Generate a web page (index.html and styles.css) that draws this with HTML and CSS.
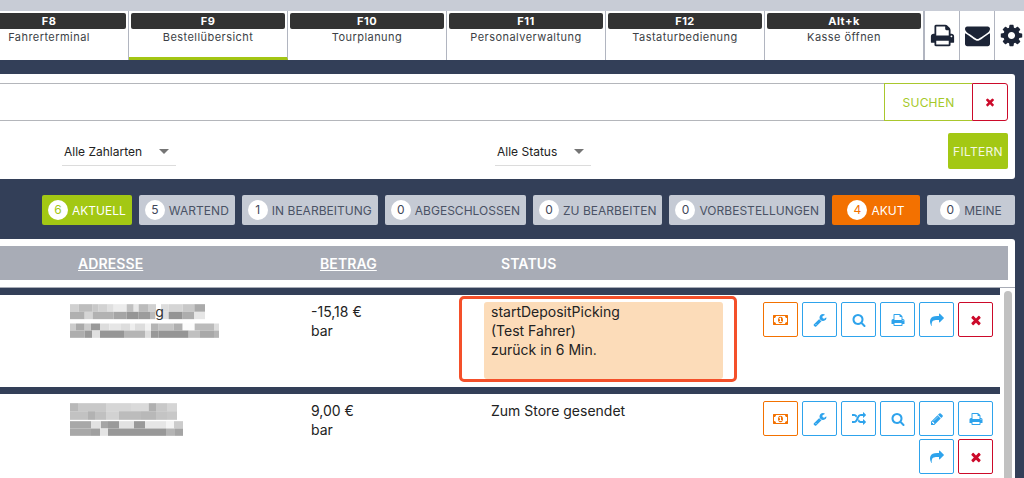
FILE: index.html
```html
<!DOCTYPE html>
<html lang="de">
<head>
<meta charset="utf-8">
<title>Bestellübersicht</title>
<link rel="stylesheet" href="styles.css">
</head>
<body>
<svg class="defs" xmlns="http://www.w3.org/2000/svg">
<symbol id="i-times" viewBox="0 0 1792 1792"><path d="M1490 1322q0 40-28 68l-136 136q-28 28-68 28t-68-28l-294-294-294 294q-28 28-68 28t-68-28l-136-136q-28-28-28-68t28-68l294-294-294-294q-28-28-28-68t28-68l136-136q28-28 68-28t68 28l294 294 294-294q28-28 68-28t68 28l136 136q28 28 28 68t-28 68l-294 294 294 294q28 28 28 68z"/></symbol>
<symbol id="i-search" viewBox="0 0 1792 1792"><path d="M1216 832q0-185-131.500-316.500t-316.500-131.500-316.500 131.500-131.500 316.500 131.500 316.500 316.500 131.500 316.500-131.500 131.500-316.500zm512 832q0 52-38 90t-90 38q-54 0-90-38l-343-342q-179 124-399 124-143 0-273.500-55.500t-225-150-150-225-55.500-273.500 55.500-273.500 150-225 225-150 273.500-55.500 273.500 55.500 225 150 150 225 55.500 273.500q0 220-124 399l343 343q37 37 37 90z"/></symbol>
<symbol id="i-print" viewBox="0 0 1792 1792"><path d="M448 1536h896v-256h-896v256zm0-640h896v-384h-160q-40 0-68-28t-28-68v-160h-640v640zm1152 64q0-26-19-45t-45-19-45 19-19 45 19 45 45 19 45-19 19-45zm128 0v416q0 13-9.500 22.500t-22.500 9.500h-224v160q0 40-28 68t-68 28h-960q-40 0-68-28t-28-68v-160h-224q-13 0-22.500-9.500t-9.500-22.500v-416q0-79 56.500-135.500t135.500-56.500h64v-544q0-40 28-68t68-28h672q40 0 88 20t76 48l152 152q28 28 48 76t20 88v256h64q79 0 135.500 56.500t56.500 135.500z"/></symbol>
<symbol id="i-envelope" viewBox="0 0 1792 1792"><path d="M1792 710v794q0 66-47 113t-113 47h-1472q-66 0-113-47t-47-113v-794q44 49 101 87 362 246 497 345 57 42 92.500 65.500t94.500 48 110 24.500h2q51 0 110-24.500t94.500-48 92.500-65.500q170-123 498-345 57-39 100-87zm0-294q0 79-49 151t-122 123q-376 261-468 325-10 7-42.500 30.500t-54 38-52 32.500-57.500 27-50 9h-2q-23 0-50-9t-57.500-27-52-32.500-54-38-42.500-30.500q-91-64-262-182.500t-205-142.500q-62-42-117-115.500t-55-136.500q0-78 41.500-130t118.500-52h1472q65 0 112.500 47t47.500 113z"/></symbol>
<symbol id="i-cog" viewBox="0 0 1792 1792"><path d="M1152 896q0-106-75-181t-181-75-181 75-75 181 75 181 181 75 181-75 75-181zm512-109v222q0 12-8 23t-20 13l-185 28q-19 54-39 91 35 50 107 138 10 12 10 25t-9 23q-27 37-99 108t-94 71q-12 0-26-9l-138-108q-44 23-91 38-16 136-29 186-7 28-36 28h-222q-14 0-24.500-8.500t-11.500-21.500l-28-184q-49-16-90-37l-141 107q-10 9-25 9-14 0-25-11-126-114-165-168-7-10-7-23 0-12 8-23 15-21 51-66.500t54-70.500q-27-50-41-99l-183-27q-13-2-21-12.500t-8-23.500v-222q0-12 8-23t19-13l186-28q14-46 39-92-40-57-107-138-10-12-10-24 0-10 9-23 26-36 98.500-107.500t94.500-71.500q13 0 26 10l138 107q44-23 91-38 16-136 29-186 7-28 36-28h222q14 0 24.500 8.500t11.500 21.500l28 184q49 16 90 37l142-107q9-9 24-9 13 0 25 10 129 119 165 170 7 8 7 22 0 12-8 23-15 21-51 66.500t-54 70.500q26 50 41 98l183 28q13 2 21 12.500t8 23.500z"/></symbol>
<symbol id="i-wrench" viewBox="0 0 1792 1792"><path d="M448 1472q0-26-19-45t-45-19-45 19-19 45 19 45 45 19 45-19 19-45zm644-420l-682 682q-37 37-90 37-52 0-91-37l-106-108q-38-36-38-90 0-53 38-91l681-681q39 98 114.500 173.500t173.500 114.500zm634-435q0 39-23 106-47 134-164.500 217.500t-258.500 83.500q-185 0-316.500-131.500t-131.500-316.500 131.500-316.500 316.500-131.500q58 0 121.500 16.500t107.500 46.500q16 11 16 28t-16 28l-293 169v224l193 107q5-3 79-48.500t135.500-81 70.500-35.500q15 0 23.500 10t8.500 25z"/></symbol>
<symbol id="i-share" viewBox="0 0 1792 1792"><path d="M1792 640q0 26-19 45l-512 512q-19 19-45 19t-45-19-19-45v-256h-224q-98 0-175.500 6t-154 21.500-133 42.500-105.500 69.500-80 101-48.500 138.500-17.500 181q0 55 5 123 0 6 2.500 23.500t2.500 26.500q0 15-8.500 25t-23.500 10q-16 0-28-17-7-9-13-22t-13.500-30-10.500-24q-127-285-127-451 0-199 53-333 162-403 875-403h224v-256q0-26 19-45t45-19 45 19l512 512q19 19 19 45z"/></symbol>
<symbol id="i-random" viewBox="0 0 1792 1792"><path d="M666 481q-60 92-137 273-22-45-37-72.500t-40.500-63.500-51-56.500-63-35-81.500-14.500h-224q-14 0-23-9t-9-23v-192q0-14 9-23t23-9h224q250 0 410 225zm1126 799q0 14-9 23l-320 320q-9 9-23 9-13 0-22.500-9.500t-9.500-22.500v-192q-32 0-85 .5t-81 1-73-1-71-5-64-10.500-63-18.500-58-28.500-59-40-55-53.500-56-69.500q59-93 136-273 22 45 37 72.500t40.500 63.500 51 56.500 63 35 81.500 14.500h256v-192q0-14 9-23t23-9q12 0 24 10l319 319q9 9 9 23zm0-896q0 14-9 23l-320 320q-9 9-23 9-13 0-22.500-9.500t-9.500-22.500v-192h-256q-48 0-87 15t-69 45-51 61.500-45 77.500q-32 62-78 171-29 66-49.500 111t-54 105-64 100-74 83-90 68.500-106.500 42-128 16.500h-224q-14 0-23-9t-9-23v-192q0-14 9-23t23-9h224q48 0 87-15t69-45 51-61.500 45-77.500q32-62 78-171 29-66 49.500-111t54-105 64-100 74-83 90-68.500 106.500-42 128-16.500h256v-192q0-14 9-23t23-9q12 0 24 10l319 319q9 9 9 23z"/></symbol>
<symbol id="i-pencil" viewBox="0 0 1792 1792"><path d="M491 1536l91-91-235-235-91 91v107h128v128h107zm523-928q0-22-22-22-10 0-17 7l-542 542q-7 7-7 17 0 22 22 22 10 0 17-7l542-542q7-7 7-17zm-54-192l416 416-832 832h-416v-416zm683 96q0 53-37 90l-166 166-416-416 166-165q36-38 90-38 53 0 91 38l235 234q37 39 37 91z"/></symbol>
<symbol id="i-money" viewBox="0 0 2048 1792"><path d="M768 1152h384v-96h-128v-448h-114l-148 137 77 80q42-37 55-57h2v288h-128v96zm512-256q0 70-21 142t-59.500 134-101.500 101-138 39-138-39-101.500-101-59.500-134-21-142 21-142 59.500-134 101.500-101 138-39 138 39 101.500 101 59.500 134 21 142zm512 256v-512q-106 0-181-75t-75-181h-1152q0 106-75 181t-181 75v512q106 0 181 75t75 181h1152q0-106 75-181t181-75zm128-832v1152q0 26-19 45t-45 19h-1792q-26 0-45-19t-19-45v-1152q0-26 19-45t45-19h1792q26 0 45 19t19 45z"/></symbol>
</svg>

<div class="strip"></div>
<nav class="nav">
  <a class="tab"><span class="key">F8</span><span class="label">Fahrerterminal</span></a>
  <a class="tab active"><span class="key">F9</span><span class="label">Bestellübersicht</span></a>
  <a class="tab"><span class="key">F10</span><span class="label">Tourplanung</span></a>
  <a class="tab"><span class="key">F11</span><span class="label">Personalverwaltung</span></a>
  <a class="tab"><span class="key">F12</span><span class="label">Tastaturbedienung</span></a>
  <a class="tab tab-last"><span class="key">Alt+k</span><span class="label">Kasse öffnen</span></a>
  <a class="tool"><svg class="tool-icon"><use href="#i-print"/></svg></a>
  <a class="tool"><svg class="tool-icon"><use href="#i-envelope"/></svg></a>
  <a class="tool tool-end"><svg class="tool-icon"><use href="#i-cog"/></svg></a>
</nav>

<section class="search-card">
  <div class="search-row">
    <div class="search-input"></div>
    <button class="btn-search">SUCHEN</button>
    <button class="btn-clear"><svg class="icon-sm"><use href="#i-times"/></svg></button>
  </div>
  <div class="filter-row">
    <div class="select select-pay"><span>Alle Zahlarten</span><i class="caret"></i></div>
    <div class="select select-status"><span>Alle Status</span><i class="caret"></i></div>
    <button class="btn-filter">FILTERN</button>
  </div>
</section>

<div class="status-tabs">
  <a class="stab stab-green"><b class="count">6</b>AKTUELL</a>
  <a class="stab"><b class="count">5</b>WARTEND</a>
  <a class="stab"><b class="count">1</b>IN BEARBEITUNG</a>
  <a class="stab"><b class="count">0</b>ABGESCHLOSSEN</a>
  <a class="stab"><b class="count">0</b>ZU BEARBEITEN</a>
  <a class="stab"><b class="count">0</b>VORBESTELLUNGEN</a>
  <a class="stab stab-orange stab-wide"><b class="count">4</b>AKUT</a>
  <a class="stab stab-wide"><b class="count">0</b>MEINE</a>
</div>

<section class="table-card">
  <div class="thead">
    <span></span>
    <a class="th th-addr">ADRESSE</a>
    <a class="th th-amount">BETRAG</a>
    <span class="th th-status">STATUS</span>
  </div>
  <div class="scroll">
    <div class="rows">
      <article class="row">
        <span></span>
        <svg class="mosaic" viewBox="12 14 447 101" width="149" height="34">
          <rect x="12" y="14" width="26" height="23" fill="#d0d0d0"/><rect x="38" y="14" width="42" height="23" fill="#bdbdbd"/><rect x="80" y="14" width="18" height="23" fill="#c8c8c8"/><rect x="98" y="14" width="27" height="23" fill="#d2d2d2"/><rect x="125" y="14" width="18" height="23" fill="#dfdfdf"/><rect x="143" y="14" width="39" height="23" fill="#ececec"/><rect x="182" y="14" width="21" height="23" fill="#c0c0c0"/><rect x="203" y="14" width="15" height="23" fill="#e8e8e8"/><rect x="218" y="14" width="30" height="23" fill="#bbb"/><rect x="248" y="14" width="22" height="23" fill="#d0d0d0"/><rect x="285" y="14" width="23" height="23" fill="#ddd"/><rect x="308" y="14" width="42" height="23" fill="#d5d5d5"/><rect x="350" y="14" width="35" height="23" fill="#c8c8c8"/><rect x="385" y="14" width="32" height="23" fill="#aaa"/>
          <rect x="12" y="37" width="44" height="22" fill="#b0b0b0"/><rect x="56" y="37" width="24" height="22" fill="#d5d5d5"/><rect x="80" y="37" width="63" height="22" fill="#b2b2b2"/><rect x="143" y="37" width="39" height="22" fill="#a5a5a5"/><rect x="182" y="37" width="36" height="22" fill="#969696"/><rect x="218" y="37" width="34" height="22" fill="#9c9c9c"/><rect x="252" y="37" width="16" height="22" fill="#bbb"/><rect x="285" y="37" width="23" height="22" fill="#e0e0e0"/><rect x="308" y="37" width="42" height="22" fill="#949494"/><rect x="350" y="37" width="35" height="22" fill="#adadad"/><rect x="385" y="37" width="32" height="22" fill="#e6e6e6"/>
          <text x="268" y="51" class="mosaic-g">g</text>
          <rect x="12" y="72" width="18" height="21" fill="#ccc"/><rect x="30" y="72" width="26" height="21" fill="#aaa"/><rect x="56" y="72" width="19" height="21" fill="#ccc"/><rect x="75" y="72" width="27" height="21" fill="#999"/><rect x="102" y="72" width="28" height="21" fill="#ddd"/><rect x="130" y="72" width="35" height="21" fill="#e6e6e6"/><rect x="165" y="72" width="27" height="21" fill="#ddd"/><rect x="192" y="72" width="15" height="21" fill="#eee"/><rect x="207" y="72" width="30" height="21" fill="#ddd"/><rect x="237" y="72" width="18" height="21" fill="#f2f2f2"/><rect x="255" y="72" width="23" height="21" fill="#b5b5b5"/><rect x="278" y="72" width="45" height="21" fill="#c5c5c5"/><rect x="323" y="72" width="27" height="21" fill="#b0b0b0"/><rect x="350" y="72" width="36" height="21" fill="#fcfcfc"/><rect x="386" y="72" width="58" height="21" fill="#bbb"/><rect x="444" y="72" width="15" height="21" fill="#ddd"/>
          <rect x="12" y="93" width="44" height="22" fill="#aeaeae"/><rect x="56" y="93" width="22" height="22" fill="#999"/><rect x="78" y="93" width="24" height="22" fill="#e0e0e0"/><rect x="102" y="93" width="72" height="22" fill="#969696"/><rect x="174" y="93" width="63" height="22" fill="#b5b5b5"/><rect x="237" y="93" width="18" height="22" fill="#ddd"/><rect x="255" y="93" width="23" height="22" fill="#999"/><rect x="278" y="93" width="90" height="22" fill="#959595"/><rect x="368" y="93" width="34" height="22" fill="#c0c0c0"/><rect x="402" y="93" width="42" height="22" fill="#a8a8a8"/><rect x="444" y="93" width="15" height="22" fill="#b5b5b5"/>
        </svg>
        <div class="cell">-15,18 €<br>bar</div>
        <div class="status status-hot">startDepositPicking<br>(Test Fahrer)<br>zurück in 6 Min.</div>
        <div class="actions">
          <a class="act act-orange"><svg class="icon-sm"><use href="#i-money"/></svg></a>
          <a class="act"><svg class="icon-sm"><use href="#i-wrench"/></svg></a>
          <a class="act"><svg class="icon-sm"><use href="#i-search"/></svg></a>
          <a class="act"><svg class="icon-sm"><use href="#i-print"/></svg></a>
          <a class="act"><svg class="icon-sm"><use href="#i-share"/></svg></a>
          <a class="act act-red"><svg class="icon-sm"><use href="#i-times"/></svg></a>
        </div>
        <div class="highlight"></div>
      </article>
      <article class="row">
        <span></span>
        <svg class="mosaic" viewBox="12 12 339 98" width="113" height="33">
          <rect x="12" y="12" width="24" height="24" fill="#b8b8b8"/><rect x="36" y="12" width="84" height="24" fill="#c8c8c8"/><rect x="120" y="12" width="75" height="24" fill="#d6d6d6"/><rect x="195" y="12" width="53" height="24" fill="#dadada"/><rect x="248" y="12" width="22" height="24" fill="#b0b0b0"/><rect x="270" y="12" width="33" height="24" fill="#c8c8c8"/><rect x="303" y="12" width="30" height="24" fill="#d5d5d5"/>
          <rect x="12" y="36" width="54" height="26" fill="#c2c2c2"/><rect x="66" y="36" width="21" height="26" fill="#b2b2b2"/><rect x="87" y="36" width="33" height="26" fill="#c0c0c0"/><rect x="120" y="36" width="39" height="26" fill="#d2d2d2"/><rect x="159" y="36" width="66" height="26" fill="#bcbcbc"/><rect x="225" y="36" width="45" height="26" fill="#b8b8b8"/><rect x="270" y="36" width="33" height="26" fill="#c4c4c4"/><rect x="303" y="36" width="30" height="26" fill="#c8c8c8"/>
          <rect x="12" y="66" width="63" height="22" fill="#a8a8a8"/><rect x="75" y="66" width="30" height="22" fill="#e2e2e2"/><rect x="105" y="66" width="21" height="22" fill="#a5a5a5"/><rect x="126" y="66" width="33" height="22" fill="#9a9a9a"/><rect x="159" y="66" width="45" height="22" fill="#e2e2e2"/><rect x="204" y="66" width="33" height="22" fill="#999"/><rect x="237" y="66" width="63" height="22" fill="#e6e6e6"/><rect x="300" y="66" width="24" height="22" fill="#f4f4f4"/><rect x="324" y="66" width="27" height="22" fill="#ccc"/>
          <rect x="12" y="88" width="63" height="22" fill="#a8a8a8"/><rect x="75" y="88" width="27" height="22" fill="#a0a0a0"/><rect x="102" y="88" width="24" height="22" fill="#e4e4e4"/><rect x="126" y="88" width="174" height="22" fill="#989898"/><rect x="300" y="88" width="27" height="22" fill="#b4b4b4"/><rect x="327" y="88" width="24" height="22" fill="#a4a4a4"/>
        </svg>
        <div class="cell">9,00 €<br>bar</div>
        <div class="status">Zum Store gesendet</div>
        <div class="actions">
          <a class="act act-orange"><svg class="icon-sm"><use href="#i-money"/></svg></a>
          <a class="act"><svg class="icon-sm"><use href="#i-wrench"/></svg></a>
          <a class="act"><svg class="icon-sm"><use href="#i-random"/></svg></a>
          <a class="act"><svg class="icon-sm"><use href="#i-search"/></svg></a>
          <a class="act"><svg class="icon-sm"><use href="#i-pencil"/></svg></a>
          <a class="act"><svg class="icon-sm"><use href="#i-print"/></svg></a>
          <a class="act"><svg class="icon-sm"><use href="#i-share"/></svg></a>
          <a class="act act-red"><svg class="icon-sm"><use href="#i-times"/></svg></a>
        </div>
      </article>
    </div>
    <div class="track"><div class="thumb"></div></div>
  </div>
</section>
</body>
</html>
```
FILE: styles.css
```css
* { box-sizing: border-box; }
html, body { height: 100%; }
body {
  margin: 0;
  height: 478px;
  overflow: hidden;
  display: flex;
  flex-direction: column;
  background: #333f58;
  font-family: Inter, "Noto Sans", "Liberation Sans", sans-serif;
  font-size: 14px;
  color: #222;
}
.defs { position: absolute; width: 0; height: 0; }
button { font-family: inherit; cursor: pointer; padding: 0; background: #fff; }

.strip { height: 11px; background: #c8ccd6; flex: none; }

.nav {
  flex: none;
  display: flex;
  height: 49px;
  margin-left: -30px;
  width: 1054px;
  background: #fff;
}
.tab {
  width: 159px;
  flex: none;
  border-right: 1px solid #b1b5c0;
  padding: 2px 2px 0;
  text-align: center;
  display: block;
}
.tab-last { width: 160px; border-right-width: 2px; }
.tab.active { border-bottom: 3px solid #a3c514; }
.key {
  display: block;
  height: 16px;
  line-height: 16px;
  background: #333;
  color: #fff;
  border-radius: 2px;
  font-size: 11px;
  font-weight: 700;
  letter-spacing: 0.5px;
}
.label {
  display: block;
  margin-top: 1px;
  line-height: 15px;
  font-size: 11px;
  letter-spacing: 0.45px;
  color: #3c3f46;
}
.tool {
  width: 35px;
  flex: none;
  border-right: 1px solid #b1b5c0;
  display: flex;
  align-items: center;
  justify-content: center;
  padding-bottom: 1px;
}
.tool-end { border-right: 0; width: 29px; justify-content: flex-start; padding-left: 4px; }
.tool-icon { width: 25px; height: 25px; fill: #1c2436; }

.search-card {
  flex: none;
  margin: 14px 9px 0 0;
  height: 105px;
  background: #fff;
  border-radius: 0 3px 3px 0;
  padding: 9px 7px 0 0;
}
.search-row { display: flex; height: 38px; }
.search-input { flex: 1; border: 1px solid #b4b6bb; border-width: 1px 0; }
.btn-search {
  width: 88px;
  border: 1px solid #a9c72d;
  border-right: 0;
  color: #a5c92a;
  font-size: 12px;
  letter-spacing: 0.2px;
}
.btn-clear {
  width: 36px;
  border: 1px solid #cc0a2a;
  border-radius: 0 3px 3px 0;
  display: flex;
  align-items: center;
  justify-content: center;
}
.icon-sm { width: 14px; height: 14px; fill: currentColor; display: block; }
.btn-clear .icon-sm { width: 12px; height: 12px; color: #cc0a2a; }

.filter-row { display: flex; padding: 12px 0 0 62px; }
.select {
  height: 33px;
  border-bottom: 1px solid #dcdcdc;
  display: flex;
  align-items: center;
  justify-content: space-between;
  padding: 4px 7px 0 2px;
  font-size: 12px;
  color: #222;
}
.select-pay { width: 114px; }
.select-status { width: 96px; margin-left: 319px; }
.caret {
  width: 0;
  height: 0;
  border: 5.5px solid transparent;
  border-top: 5px solid #757575;
  border-bottom: 0;
}
.btn-filter {
  margin-left: auto;
  width: 60px;
  height: 36px;
  background: #a3c814;
  border: 0;
  border-radius: 2px;
  color: #f4f8e2;
  font-size: 12px;
  letter-spacing: 0.3px;
}

.status-tabs {
  flex: none;
  display: flex;
  justify-content: flex-end;
  gap: 7px;
  margin: 16px 9px 14px 0;
  height: 30px;
}
.stab {
  display: flex;
  align-items: center;
  gap: 4px;
  padding: 0 6px;
  background: #c5cad4;
  color: #4a5265;
  border-radius: 2px;
  font-size: 12px;
  letter-spacing: 0.02px;
  white-space: nowrap;
}
.stab-wide { width: 88px; justify-content: center; }
.stab-green { background: #a3c814; color: #fff; }
.stab-orange { background: #f37100; color: #fff; }
.count {
  width: 20px;
  height: 20px;
  border-radius: 50%;
  background: #fff;
  font-weight: 400;
  font-size: 12px;
  letter-spacing: 0;
  text-align: center;
  line-height: 20px;
  color: #3f4759;
}
.stab-green .count { color: #a3c814; }
.stab-orange .count { color: #f37100; }

.table-card {
  flex: 1;
  min-height: 0;
  margin-right: 9px;
  background: #fff;
  border-radius: 0 3px 0 0;
  padding-top: 7px;
  display: flex;
  flex-direction: column;
}
.thead,
.row {
  display: grid;
  grid-template-columns: 70px 241px 173px 279px 230px;
}
.thead {
  flex: none;
  height: 34px;
  margin-right: 7px;
  background: #a8acb6;
  align-items: center;
}
.th { color: #fff; font-size: 14px; font-weight: 600; letter-spacing: 0.1px; }
.th-addr, .th-amount { text-decoration: underline; }
.th-addr { padding-left: 8px; }
.th-amount { padding-left: 9px; }
.th-status { padding-left: 17px; }

.scroll {
  flex: 1;
  min-height: 0;
  margin-top: 7px;
  display: flex;
  overflow: hidden;
  border-top: 1px solid #a8acb6;
}
.rows {
  width: 1000px;
  flex: none;
  background: #333f58;
  padding-top: 7px;
  display: flex;
  flex-direction: column;
  gap: 7px;
}
.row {
  position: relative;
  flex: none;
  height: 92px;
  background: #fff;
  padding-top: 7px;
  align-items: start;
  line-height: 19px;
  font-size: 14px;
}
.row:last-child { height: 120px; }
.mosaic { display: block; margin-top: 2px; }
.mosaic-g { font-size: 42px; fill: #333; font-family: Inter, sans-serif; }
.status { width: 239px; padding-left: 7px; border-radius: 3px; }
.status-hot { height: 77px; background: #fcdcb9; }
.actions {
  display: flex;
  flex-wrap: wrap;
  justify-content: flex-end;
  gap: 3px 4px;
}
.act {
  width: 35px;
  height: 35px;
  border: 1px solid #2ea3ec;
  border-radius: 2px;
  color: #2ea3ec;
  display: flex;
  align-items: center;
  justify-content: center;
}
.act-orange { border-color: #f37100; color: #f37100; }
.act-orange .icon-sm { width: 16px; }
.act-red { border-color: #cc0a2a; color: #cc0a2a; }
.highlight {
  position: absolute;
  left: 459px;
  top: 1px;
  width: 278px;
  height: 86px;
  border: 3px solid #f4502a;
  border-radius: 5px;
  pointer-events: none;
}
.track { flex: 1; background: #fff; padding: 3px 3px 0 4px; }
.thumb { height: 400px; background: #c1c1c1; border-radius: 4px; }
```
